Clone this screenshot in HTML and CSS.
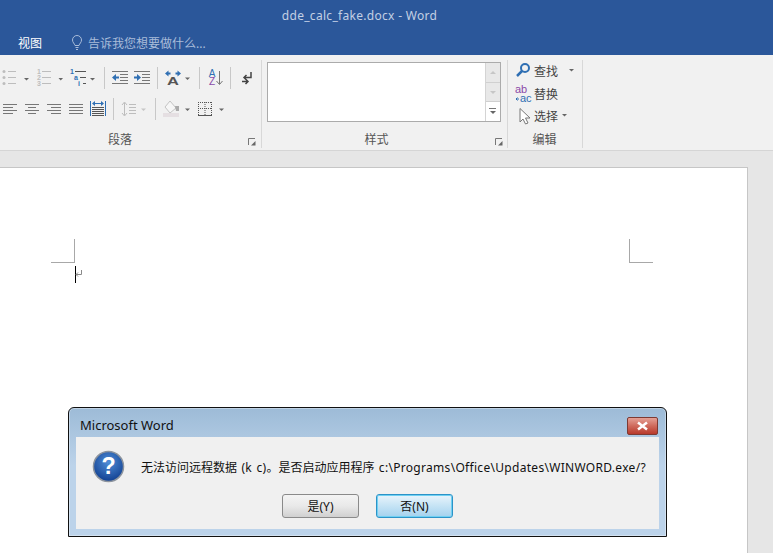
FILE: index.html
```html
<!DOCTYPE html>
<html lang="zh-CN">
<head>
    <meta charset="UTF-8">
    <meta name="viewport" content="width=device-width, initial-scale=1.0">
    <title>dde_calc_fake.docx - Word</title>
    <link rel="stylesheet" href="styles.css">
</head>
<body>

<div class="titlebar">
    <div class="doc-title">dde_calc_fake.docx - Word</div>
    <div class="tabs">
        <span class="tab">视图</span>
        <svg class="bulb" width="12" height="16" viewBox="0 0 12 16">
            <path class="bulb-line" d="M4 10.5C3.5 8.5 1.5 7.5 1.5 5A4.5 4.5 0 0 1 10.5 5C10.5 7.500 8.500 8.500 8 10.500Z"/>
            <path class="bulb-line" d="M4.500 12.500H7.500M5 14.500H7"/>
        </svg>
        <span class="tell-me">告诉我您想要做什么...</span>
    </div>
</div>

<div class="ribbon">
    <div class="group group-para">
        <div class="tool-row">
            <svg width="32" height="22"><g class="off"><circle cx="4" cy="4.500" r="1.500"/><circle cx="4" cy="10.500" r="1.500"/><circle cx="4" cy="16.500" r="1.500"/></g><path class="ln-off" d="M8 4.500H16M8 10.500H16M8 16.500H16"/><path class="caret" d="M24 11H29L26.500 13.500Z"/></svg>
            <svg width="34" height="22"><g class="digit digit-off"><text x="5" y="7">1</text><text x="5" y="13">2</text><text x="5" y="19">3</text></g><path class="ln-off" d="M10 4.500H19M10 10.500H19M10 16.500H19"/><path class="caret" d="M26.500 11H31L28.750 13.500Z"/></svg>
            <svg width="34" height="22"><g class="digit digit-blue"><text x="4" y="7">1</text><text x="8" y="13">a</text><text x="12" y="19">i</text></g><path class="ln-dark" d="M9 4.500H20M14 10.500H20M17 16.500H20"/><path class="caret" d="M24 11H29L26.500 13.500Z"/></svg>
            <div class="sep"></div>
            <svg width="23" height="22"><path class="ln" d="M4 4.500H20M12 7.500H20M12 10.500H20M12 13.500H20M4 16.500H20"/><path class="blue" d="M4 10.500L8 7V9.500H11V11.500H8V14Z"/></svg>
            <svg width="22" height="22"><path class="ln" d="M3 4.500H19M11 7.500H19M11 10.500H19M11 13.500H19M3 16.500H19"/><path class="blue" d="M10 10.500L6 7V9.500H3V11.500H6V14Z"/></svg>
            <div class="sep"></div>
            <svg width="34" height="22"><text class="glyph-a" transform="translate(12 18) scale(1.5 1)">A</text><path class="blue" d="M4 6.500L7.500 3.500V5.500H9.500V7.500H7.500V9.500ZM20 6.500L16.500 3.500V5.500H14.500V7.500H16.500V9.500Z"/><path class="caret" d="M24 10.500H29L26.500 13Z"/></svg>
            <div class="sep"></div>
            <svg width="23" height="22"><text class="sort-a" x="9" y="10">A</text><text class="sort-z" x="9" y="18">Z</text><path class="ln" d="M16.500 4V17M13.500 14L16.500 17.500L19.500 14"/></svg>
            <div class="sep"></div>
            <svg width="24" height="22"><path class="ln-break" d="M17 5V10.500H10M12.500 8L10 10.500L12.500 13M8 14.500H14M11.500 12L14 14.500L11.500 17"/></svg>
        </div>
        <div class="tool-row row-two">
            <svg width="22" height="22"><path class="ln" d="M3 6.500H17M3 9.500H13M3 12.500H17M3 15.500H13"/></svg>
            <svg width="22" height="22"><path class="ln" d="M3 6.500H17M6 9.500H14M3 12.500H17M6 15.500H14"/></svg>
            <svg width="22" height="22"><path class="ln" d="M3 6.500H17M7 9.500H17M3 12.500H17M7 15.500H17"/></svg>
            <svg width="22" height="22"><path class="ln" d="M3 6.500H17M3 9.500H17M3 12.500H17M3 15.500H17"/></svg>
            <svg width="22" height="22"><path class="ln-blue" d="M2.500 3V18M17.500 3V18M5 5.500H15"/><path class="blue" d="M4 5.500L7 3V8ZM16 5.500L13 3V8Z"/><path class="ln-dark" d="M4 9.500H16M4 11.500H16M4 13.500H16M4 15.500H16M4 17.500H16"/></svg>
            <div class="sep sep-short"></div>
            <svg width="34" height="22"><path class="ln-off" d="M7.500 5V17M5 7L7.500 4L10 7M5 15L7.500 18L10 15M12 6.500H19M12 9.500H19M12 12.500H19M12 15.500H19"/><path class="caret-off" d="M24 10.500H29L26.500 13Z"/></svg>
            <div class="sep"></div>
            <svg width="34" height="22"><rect class="shade-bar" x="4" y="15" width="16" height="4"/><path class="bucket" d="M6 9L11 3L17 10L11 15Z"/><path class="bucket-drop" d="M16 8H20V13H17Z"/><path class="caret" d="M26 10.500H31L28.500 13Z"/></svg>
            <svg width="34" height="22"><path class="dots" d="M5.500 4V17M18.500 4V17M12 4V17M5 4.500H19M5 10.500H19"/><path class="ln-dark" d="M5 17.500H19"/><path class="caret" d="M26 10.500H31L28.500 13Z"/></svg>
        </div>
        <div class="group-foot foot-para">
            <span class="foot-label">段落</span>
            <svg class="launcher" width="8" height="8"><path class="ln" d="M.5 7V.5H7"/><path class="caret" d="M7.500 7.500H3L7.500 3Z"/></svg>
        </div>
    </div>

    <div class="group group-styles">
        <div class="gallery">
            <div class="gallery-body"></div>
            <div class="gallery-scroll">
                <div class="scroll-btn btn-up"><svg width="7" height="5"><path class="caret-off" d="M0 4H6L3 1Z"/></svg></div>
                <div class="scroll-btn btn-down"><svg width="7" height="5"><path class="caret-off" d="M0 1H6L3 4Z"/></svg></div>
                <div class="scroll-btn btn-more"><svg width="8" height="7"><path class="ln" d="M0 .5H7"/><path class="caret" d="M1 3H7L4 6Z"/></svg></div>
            </div>
        </div>
        <div class="group-foot foot-styles">
            <span class="foot-label">样式</span>
            <svg class="launcher" width="8" height="8"><path class="ln" d="M.5 7V.5H7"/><path class="caret" d="M7.500 7.500H3L7.500 3Z"/></svg>
        </div>
    </div>

    <div class="group group-edit">
        <div class="edit-row">
            <svg width="20" height="22"><circle class="lens" cx="11" cy="8" r="4"/><path class="lens-handle" d="M8 11L3 16"/></svg>
            <span class="edit-text">查找</span>
            <svg class="edit-caret-far" width="6" height="4"><path class="caret" d="M0 0H5L2.500 2.500Z"/></svg>
        </div>
        <div class="edit-row">
            <svg width="20" height="22"><text class="ab" x="1" y="10">ab</text><text class="ac" x="6" y="18.500">ac</text><path class="ln-blue" d="M5 16H2M3.500 14.500L2 16L3.500 17.500"/></svg>
            <span class="edit-text">替换</span>
        </div>
        <div class="edit-row">
            <svg width="20" height="22"><path class="pointer" d="M6 3.500V17L9 14L11.500 19L14 18L11.500 13H16Z"/></svg>
            <span class="edit-text">选择</span>
            <svg class="edit-caret" width="6" height="4"><path class="caret" d="M0 0H5L2.500 2.500Z"/></svg>
        </div>
        <div class="group-foot foot-edit">
            <span class="foot-label">编辑</span>
        </div>
    </div>
</div>

<div class="workspace">
    <div class="page">
        <div class="crop crop-left"></div>
        <div class="crop crop-right"></div>
        <div class="caret-line"></div>
        <svg class="para-mark" width="8" height="9"><path d="M6.500 1V5.500H1M3 3.500L1 5.500L3 7.500"/></svg>
    </div>
</div>

<div class="dialog">
    <div class="dialog-head">
        <span class="dialog-title">Microsoft Word</span>
        <button class="close-btn" type="button" aria-label="关闭">
            <svg width="13" height="10"><path d="M2 1.500L11 8.500M11 1.500L2 8.500"/></svg>
        </button>
    </div>
    <div class="dialog-body">
        <div class="dialog-msg">
            <svg class="help-icon" width="33" height="33" viewBox="0 0 34 34">
                <defs>
                    <radialGradient id="helpFill" cx="50%" cy="35%" r="70%">
                        <stop offset="0" stop-color="#4f8ed8"/>
                        <stop offset="1" stop-color="#0d3a8c"/>
                    </radialGradient>
                </defs>
                <circle cx="17" cy="17" r="15.500" fill="url(#helpFill)" stroke="#8d949e" stroke-width="1.500"/>
                <text class="help-mark" x="17" y="25">?</text>
            </svg>
            <span class="msg-text">无法访问远程数据<span class="msg-latin"> (k c)</span>。是否启动应用程序<span class="msg-latin"> c:\Programs\Office\Updates\WINWORD.exe/?</span></span>
        </div>
        <div class="dialog-btns">
            <button class="dlg-btn" type="button">是(Y)</button>
            <button class="dlg-btn dlg-btn-default" type="button">否(N)</button>
        </div>
    </div>
</div>

</body>
</html>
```

FILE: styles.css
```css
* {
    box-sizing: border-box;
}

html, body {
    height: 100%;
}

body {
    margin: 0;
    display: flex;
    flex-direction: column;
    overflow: hidden;
    position: relative;
    background-color: #e6e6e6;
    font-family: "Noto Sans", "Noto Sans CJK SC", sans-serif;
    font-size: 12px;
}

svg {
    display: block;
    flex: none;
}

/* title bar */
.titlebar {
    height: 55px;
    background-color: #2b579a;
    color: #fff;
}

.doc-title {
    height: 30px;
    line-height: 31px;
    padding-right: 54px;
    text-align: center;
    color: #c3d0e4;
    font-size: 12px;
    letter-spacing: .3px;
}

.tabs {
    display: flex;
    align-items: center;
    height: 25px;
    padding-left: 18px;
}

.tab {
    width: 24px;
    white-space: nowrap;
}

.bulb {
    margin-left: 29px;
}

.bulb-line {
    fill: none;
    stroke: #a9bcd9;
}

.tell-me {
    margin-left: 5px;
    color: #a9bcd9;
    white-space: nowrap;
}

/* ribbon */
.ribbon {
    display: flex;
    height: 96px;
    padding-top: 5px;
    background-color: #f1f1f1;
    border-bottom: 1px solid #d5d5d5;
    color: #444;
}

.group {
    display: flex;
    flex-direction: column;
    flex: none;
    height: 88px;
    border-right: 1px solid #d8d8d8;
}

.group-para {
    width: 262px;
    padding-top: 7px;
}

.group-styles {
    width: 246px;
    padding: 2px 0 0 5px;
}

.group-edit {
    width: 75px;
    padding-left: 6px;
}

.tool-row {
    display: flex;
    height: 22px;
}

.row-two {
    margin-top: 9px;
}

.sep {
    width: 1px;
    margin: 0 3px 0 4px;
    background-color: #c8c8c8;
}

.sep-short {
    margin-left: 3px;
}

.group-foot {
    display: flex;
    align-items: center;
    height: 16px;
    margin-top: auto;
}

.foot-label {
    flex: 1;
    text-align: center;
    color: #555;
    line-height: 16px;
}

.foot-para {
    padding-right: 5px;
}

.foot-para .foot-label {
    padding-right: 8px;
}

.foot-styles {
    padding-right: 4px;
}

.foot-styles .foot-label {
    padding-right: 9px;
}

.foot-edit .foot-label {
    padding-right: 7px;
}

.launcher {
    margin-top: 3px;
}

/* icon strokes */
.ln, .ln-off, .ln-blue, .ln-dark, .ln-break, .dots {
    fill: none;
    stroke-width: 1;
}

.ln {
    stroke: #777;
}

.ln-off {
    stroke: #bdbdbd;
}

.ln-blue {
    stroke: #2f6fb3;
}

.ln-dark {
    stroke: #555;
}

.ln-break {
    stroke: #444;
    stroke-width: 1.500;
}

.dots {
    stroke: #555;
    stroke-dasharray: 1 1;
}

.off {
    fill: #bdbdbd;
}

.blue {
    fill: #2f6fb3;
}

.caret {
    fill: #666;
}

.caret-off {
    fill: #c6c6c6;
}

.digit {
    font-family: "Liberation Sans", sans-serif;
    font-size: 7px;
    font-weight: 700;
}

.digit-off {
    fill: #bdbdbd;
}

.digit-blue {
    fill: #2f6fb3;
}

.glyph-a {
    fill: #555;
    font-family: "Liberation Sans", sans-serif;
    font-size: 11px;
    font-weight: 700;
    text-anchor: middle;
}

.sort-a, .sort-z {
    font-family: "Liberation Sans", sans-serif;
    font-size: 10px;
    text-anchor: middle;
}

.sort-a {
    fill: #2f6fb3;
}

.sort-z {
    fill: #8a4aa8;
}

.shade-bar {
    fill: #e5dfe2;
}

.bucket {
    fill: #f6f6f6;
    stroke: #c4c4c4;
}

.bucket-drop {
    fill: #aaa;
}

/* styles gallery */
.gallery {
    display: flex;
    width: 234px;
    height: 60px;
    border: 1px solid #ababab;
    background-color: #fff;
}

.gallery-body {
    flex: 1;
}

.gallery-scroll {
    display: flex;
    flex-direction: column;
    width: 15px;
    border-left: 1px solid #d4d4d4;
}

.scroll-btn {
    display: flex;
    align-items: center;
    justify-content: center;
    flex: 1;
}

.btn-up, .btn-down {
    background-color: #e8e8e8;
}

.btn-down {
    border-top: 1px solid #d0d0d0;
}

.btn-more {
    border-top: 1px solid #d0d0d0;
}

/* editing group */
.edit-row {
    display: flex;
    align-items: center;
    height: 22.500px;
}

.edit-text {
    width: 24px;
    white-space: nowrap;
}

.edit-caret-far {
    margin-left: 11px;
}

.edit-caret {
    margin-left: 4px;
}

.lens {
    fill: none;
    stroke: #2f6fb3;
    stroke-width: 2;
}

.lens-handle {
    fill: none;
    stroke: #2f6fb3;
    stroke-width: 2.500;
}

.ab, .ac {
    font-family: "Liberation Sans", sans-serif;
    font-size: 11px;
}

.ab {
    fill: #8a4aa8;
}

.ac {
    fill: #2f6fb3;
}

.pointer {
    fill: #fff;
    stroke: #777;
}

/* document */
.workspace {
    flex: 1;
    padding: 16px 25px 0 0;
    background-color: #e6e6e6;
    min-height: 0;
}

.page {
    position: relative;
    height: 100%;
    background-color: #fff;
    border: 1px solid #c6c6c6;
    border-width: 1px 1px 0 0;
}

.crop {
    position: absolute;
    top: 71px;
    width: 24px;
    height: 24px;
    border-bottom: 1px solid #a8a8a8;
}

.crop-left {
    left: 51px;
    border-right: 1px solid #a8a8a8;
}

.crop-right {
    left: 629px;
    border-left: 1px solid #a8a8a8;
}

.caret-line {
    position: absolute;
    left: 75px;
    top: 98px;
    width: 1px;
    height: 17px;
    background-color: #000;
}

.para-mark {
    position: absolute;
    left: 75px;
    top: 101px;
}

.para-mark path {
    fill: none;
    stroke: #8a8a8a;
}

/* dialog */
.dialog {
    position: absolute;
    left: 68px;
    top: 407px;
    width: 599px;
    height: 130px;
    display: flex;
    flex-direction: column;
    padding: 0 7px 7px;
    border: 1px solid #111;
    border-radius: 6px 6px 0 0;
    background: linear-gradient(#9dbbd7, #bcd3ea 45%, #bcd3ea);
    box-shadow: inset 0 0 0 1px rgba(255, 255, 255, .35);
}

.dialog-head {
    display: flex;
    justify-content: space-between;
    height: 29px;
}

.dialog-title {
    margin: 9px 0 0 4px;
    color: #111;
    font-size: 13px;
    line-height: 17px;
}

.close-btn {
    display: flex;
    align-items: center;
    justify-content: center;
    width: 31px;
    height: 18px;
    margin: 9px 1px 0 0;
    padding: 0;
    border: 1px solid #7d3a33;
    border-radius: 2px;
    background: linear-gradient(#e4a095, #cf6a5c 50%, #b8392b);
}

.close-btn path {
    fill: none;
    stroke: #fff;
    stroke-width: 2.500;
}

.dialog-body {
    flex: 1;
    display: flex;
    flex-direction: column;
    background-color: #f0f0f0;
}

.dialog-msg {
    display: flex;
    align-items: center;
    height: 57px;
    padding: 2px 0 0 16px;
}

.msg-text {
    margin-left: 16px;
    color: #111;
    font-size: 12px;
    white-space: nowrap;
}

.msg-latin {
    letter-spacing: .3px;
    word-spacing: 1px;
}

.help-mark {
    fill: #fff;
    font-family: "Liberation Sans", sans-serif;
    font-size: 24px;
    font-weight: 700;
    text-anchor: middle;
}

.dialog-btns {
    display: flex;
    gap: 17px;
    padding-left: 206px;
}

.dlg-btn {
    width: 77px;
    height: 24px;
    padding: 0;
    border: 1px solid #8a8a8a;
    border-radius: 3px;
    background: linear-gradient(#f4f4f4, #e9e9e9 50%, #d0d0d0);
    color: #111;
    font-family: inherit;
    font-size: 12px;
}

.dlg-btn-default {
    border-color: #2c93c8;
    box-shadow: inset 0 0 0 1px #6fd0f2;
    background: linear-gradient(#e9f4fb, #c5e3f5 50%, #a4d2ee);
}
```
